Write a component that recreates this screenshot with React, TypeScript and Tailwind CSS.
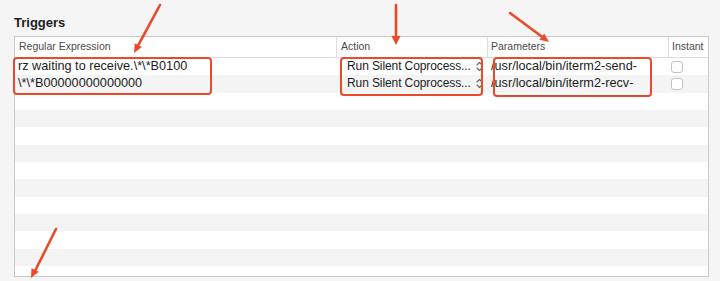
import React from "react";

type Trigger = { regex: string; action: string; params: string };

const triggers: Trigger[] = [
  { regex: "rz waiting to receive.\\*\\*B0100", action: "Run Silent Coprocess...", params: "/usr/local/bin/iterm2-send-" },
  { regex: "\\*\\*B00000000000000", action: "Run Silent Coprocess...", params: "/usr/local/bin/iterm2-recv-" },
];

const RED = "#ea4a2a";

function UpDown() {
  return (
    <svg width="7" height="11" viewBox="0 0 7 11" className="shrink-0">
      <path d="M1 4 L3.5 1.5 L6 4" fill="none" stroke="#666" strokeWidth="1.1" strokeLinecap="round" strokeLinejoin="round" />
      <path d="M1 7 L3.5 9.5 L6 7" fill="none" stroke="#666" strokeWidth="1.1" strokeLinecap="round" strokeLinejoin="round" />
    </svg>
  );
}

export default function App() {
  const rows = Array.from({ length: 13 });

  return (
    <div
      className="relative w-[720px] h-[281px] overflow-hidden bg-[#f5f5f5] text-[#1c1c1c]"
      style={{ fontFamily: '"Liberation Sans", Arial, sans-serif' }}
    >
      <div className="pl-[14px] pt-[15px] text-[13px] leading-[16px] font-bold">Triggers</div>

      {/* Table */}
      <div className="ml-[14px] mt-[5px] w-[695px] h-[241px] border border-[#cacaca] bg-white overflow-hidden">
        <div className="grid grid-cols-[321px_151px_181px_40px] h-[21px] border-b border-[#dcdcdc] text-[10.5px] text-[#4a4a4a]">
          <div className="flex items-center pl-[4px]">Regular Expression</div>
          <div className="flex items-center pl-[4px] border-l border-[#dedede]">Action</div>
          <div className="flex items-center pl-[3px] border-l border-[#dedede]">Parameters</div>
          <div className="flex items-center pl-[3px] border-l border-[#dedede]">Instant</div>
        </div>

        {rows.map((_, i) => {
          const t = triggers[i];
          return (
            <div
              key={i}
              className={`grid grid-cols-[321px_151px_181px_40px] h-[17.33px] text-[12.7px] leading-[17px] ${
                i % 2 === 1 ? "bg-[#f4f4f4]" : "bg-white"
              }`}
            >
              {t ? (
                <>
                  <div className="flex items-center pl-[3px] whitespace-nowrap">{t.regex}</div>
                  <div className="flex items-center pl-[11px] pr-[4px] whitespace-nowrap overflow-hidden">
                    <span className="flex-1 min-w-0 text-[12px] tracking-[-0.1px]">{t.action}</span>
                    <UpDown />
                  </div>
                  <div className="flex items-center pl-[4px] whitespace-nowrap">{t.params}</div>
                  <div className="flex items-center pl-[3px]">
                    <div className="w-[12px] h-[12px] rounded-[3px] border border-[#c4c4c4] bg-white" />
                  </div>
                </>
              ) : null}
            </div>
          );
        })}
      </div>

      {/* Annotation boxes */}
      <div className="absolute left-[13px] top-[57px] w-[199px] h-[38px] rounded-[4px] border-2 border-[#ea4a2a]" />
      <div className="absolute left-[340px] top-[57px] w-[143px] h-[39px] rounded-[4px] border-2 border-[#ea4a2a]" />
      <div className="absolute left-[493px] top-[57px] w-[159px] h-[40px] rounded-[4px] border-2 border-[#ea4a2a]" />

      {/* Annotation arrows */}
      <svg className="absolute inset-0 pointer-events-none" width="720" height="281">
        <g stroke={RED} strokeWidth="2.6" strokeLinecap="round" fill="none">
          <line x1="160" y1="5" x2="138.3" y2="45.1" />
          <line x1="396" y1="5" x2="396" y2="37" />
          <line x1="510" y1="13" x2="542" y2="36.7" />
          <line x1="56" y1="229" x2="35.5" y2="270" />
        </g>
        <g fill={RED}>
          <polygon points="134,53 141.8,47 134.8,43.2" />
          <polygon points="391.5,36 400.5,36 396,45" />
          <polygon points="549,42 539.4,39.8 544.2,33.4" />
          <polygon points="31,278 38.7,271.8 31.5,268.2" />
        </g>
      </svg>
    </div>
  );
}
